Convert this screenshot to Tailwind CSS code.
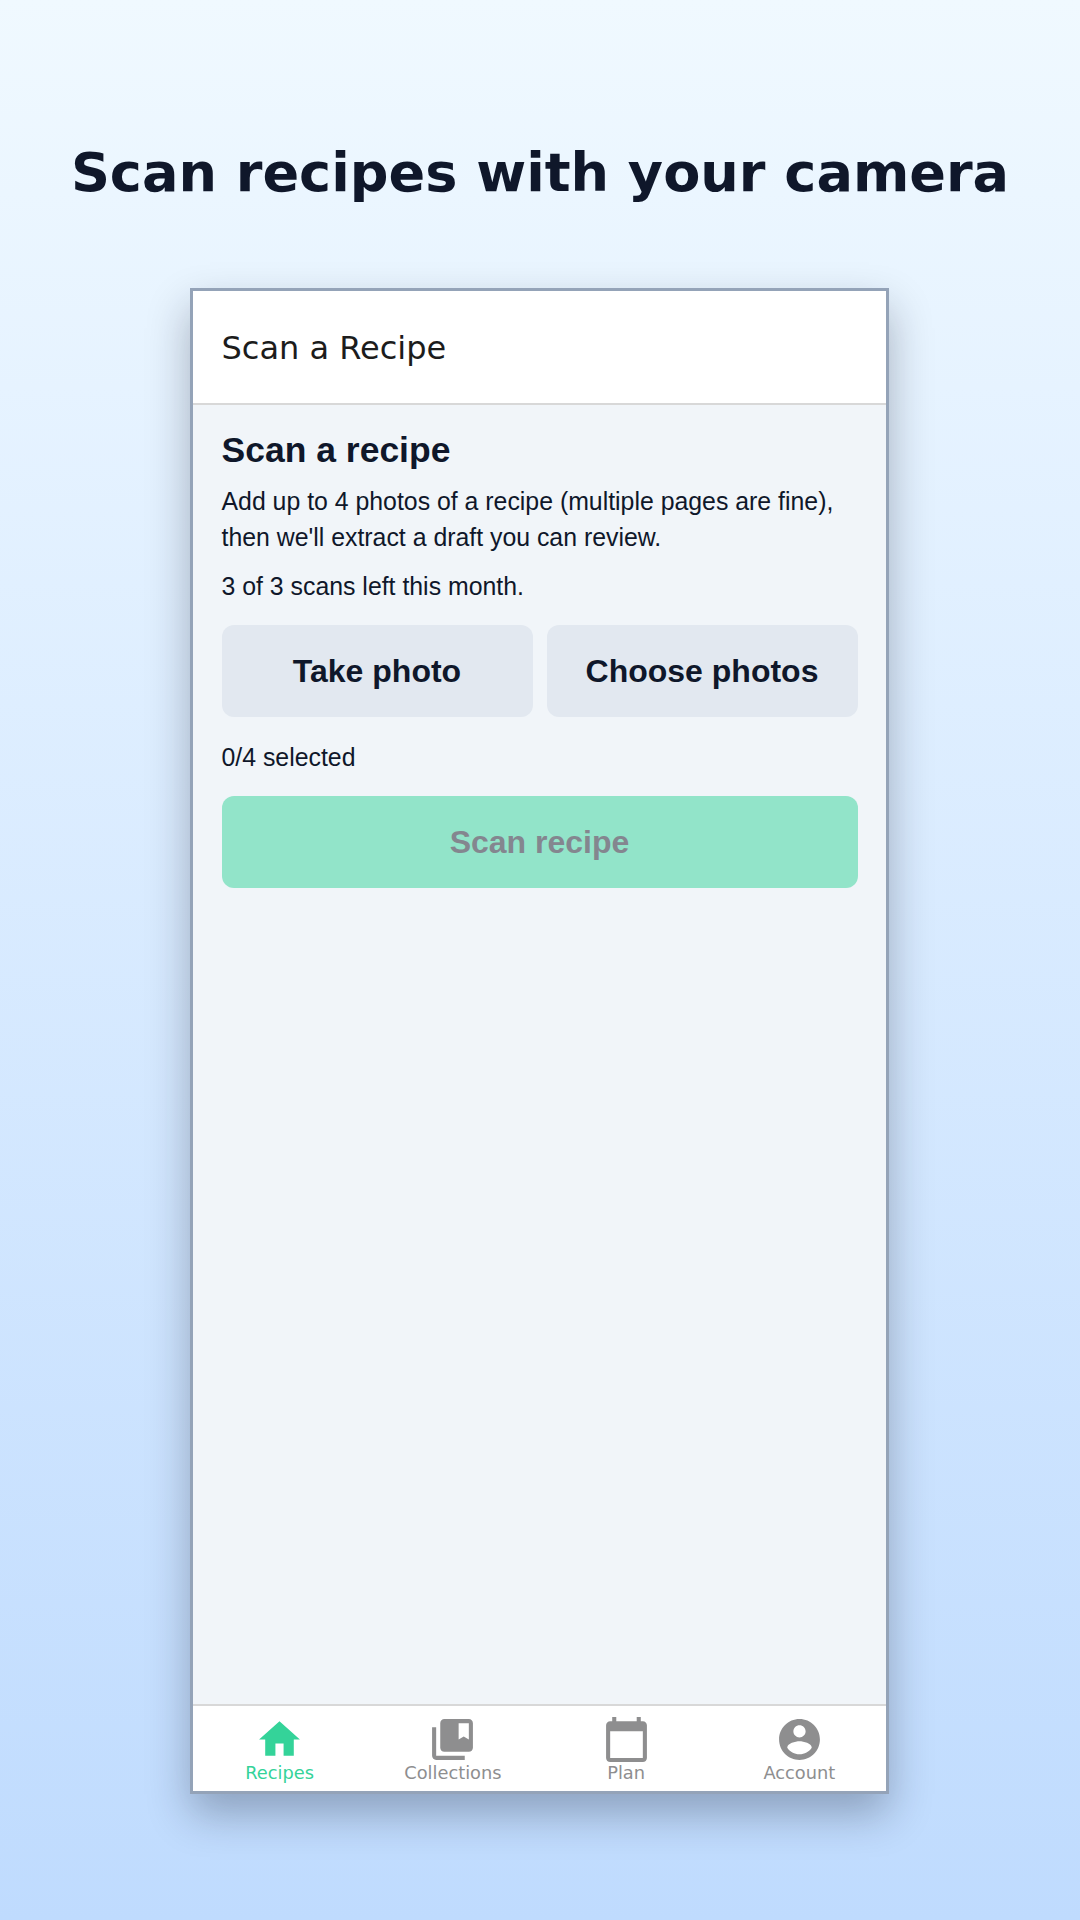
<!DOCTYPE html>
<html lang="en">

<head>
  <meta charset="UTF-8" />
  <meta name="viewport" content="width=device-width, initial-scale=1.0" />
  <title>Scan recipes</title>
  <script src="https://cdn.jsdelivr.net/npm/@tailwindcss/browser@4"></script>
</head>

<body class="h-[1920px] w-[1080px] overflow-hidden bg-gradient-to-b from-[#f0f9ff] to-[#bfdbfe] flex flex-col items-center font-['Liberation_Sans',sans-serif] text-[#0f172a]">

  <!-- Headline -->
  <h1 class="mt-[137px] h-[72px] mb-[79px] leading-[72px] text-[54.1px] font-bold font-['DejaVu_Sans',sans-serif] whitespace-nowrap">Scan recipes with your camera</h1>

  <!-- Phone frame -->
  <div class="w-[699px] mr-[1px] h-[1506px] border-[3px] border-[#94a3b8] bg-[#f1f5f9] flex flex-col shadow-[0_20px_40px_rgba(15,23,42,0.3)]">

    <!-- App bar -->
    <header class="h-[114px] shrink-0 bg-white border-b-2 border-[#d8d8d8] px-[28.5px] pt-[2px] flex items-center">
      <span class="text-[32px] text-[#1c1c1c] font-['DejaVu_Sans',sans-serif]">Scan a Recipe</span>
    </header>

    <!-- Content -->
    <main class="flex-1 px-[28.5px] pt-[23px]">
      <h2 class="text-[35.5px] leading-[44px] font-bold">Scan a recipe</h2>
      <p class="mt-[12px] text-[24.85px] leading-[36px]">Add up to 4 photos of a recipe (multiple pages are fine), then we'll extract a draft you can review.</p>
      <p class="mt-[13px] text-[24.85px] leading-[36px]">3 of 3 scans left this month.</p>

      <div class="mt-[20px] grid grid-cols-2 gap-[14px]">
        <button class="h-[92px] rounded-[12px] bg-[#e2e8f0] text-[32px] font-bold">Take photo</button>
        <button class="h-[92px] rounded-[12px] bg-[#e2e8f0] text-[32px] font-bold">Choose photos</button>
      </div>

      <p class="mt-[23px] text-[24.85px] leading-[36px]">0/4 selected</p>

      <button class="mt-[20px] w-full h-[92px] rounded-[12px] bg-[#34d399]/50 text-[32px] font-bold text-[#84868f]">Scan recipe</button>
    </main>

    <!-- Bottom tabs -->
    <nav class="h-[87px] shrink-0 bg-white border-t-2 border-[#d8d8d8] grid grid-cols-4 text-[17.8px] leading-[22px] text-[#8e8e8f] font-['DejaVu_Sans',sans-serif]">
      <a class="flex flex-col items-center pt-[9px] text-[#34d399]">
        <svg class="w-[49px] h-[49px] -mb-[2px]" viewBox="0 0 24 24" fill="currentColor"><path d="M10 20v-6h4v6h5v-8h3L12 3 2 12h3v8z"/></svg>
        <span>Recipes</span>
      </a>
      <a class="flex flex-col items-center pt-[9px]">
        <svg class="w-[49px] h-[49px] -mb-[2px]" viewBox="0 0 24 24" fill="currentColor"><path d="M4 6H2v14c0 1.1.9 2 2 2h14v-2H4V6z"/><path d="M20 2H8c-1.1 0-2 .9-2 2v12c0 1.1.9 2 2 2h12c1.1 0 2-.9 2-2V4c0-1.1-.9-2-2-2zm0 10l-2.5-1.5L15 12V4h5v8z"/></svg>
        <span>Collections</span>
      </a>
      <a class="flex flex-col items-center pt-[9px]">
        <svg class="w-[49px] h-[49px] -mb-[2px]" viewBox="0 0 24 24" fill="currentColor"><path d="M20 3h-1V1h-2v2H7V1H5v2H4c-1.1 0-2 .9-2 2v16c0 1.1.9 2 2 2h16c1.1 0 2-.9 2-2V5c0-1.1-.9-2-2-2zm0 18H4V8h16v13z"/></svg>
        <span>Plan</span>
      </a>
      <a class="flex flex-col items-center pt-[9px]">
        <svg class="w-[49px] h-[49px] -mb-[2px]" viewBox="0 0 24 24" fill="currentColor"><path d="M12 2C6.48 2 2 6.48 2 12s4.48 10 10 10 10-4.48 10-10S17.52 2 12 2zm0 3c1.66 0 3 1.34 3 3s-1.34 3-3 3-3-1.34-3-3 1.34-3 3-3zm0 14.2c-2.5 0-4.71-1.28-6-3.22.03-1.99 4-3.08 6-3.08 1.99 0 5.97 1.09 6 3.08-1.29 1.94-3.5 3.22-6 3.22z"/></svg>
        <span>Account</span>
      </a>
    </nav>
  </div>

</body>

</html>
